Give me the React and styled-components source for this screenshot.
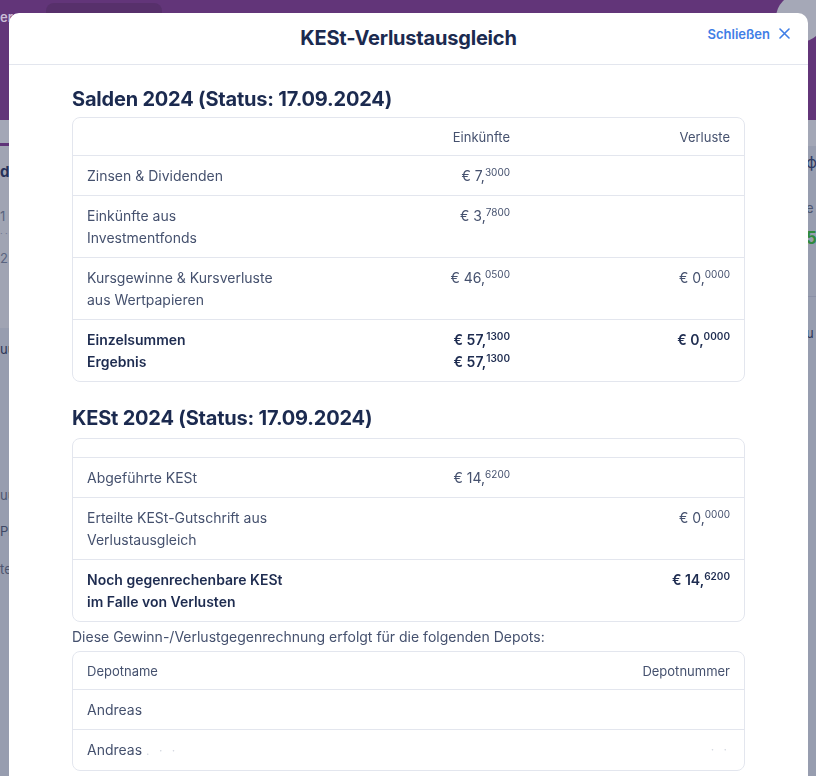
import React from "react";
import styled, { createGlobalStyle } from "styled-components";

const GlobalStyle = createGlobalStyle`
  html, body {
    margin: 0;
    height: 100%;
    overflow: hidden;
    background: #979daf;
    font-family: Inter, "Noto Sans", sans-serif;
  }
`;

/* ---------- dimmed page behind the dialog ---------- */

const Page = styled.div`
  height: 100vh;
  display: flex;
  flex-direction: column;
`;

const TopBar = styled.header`
  height: 120px;
  flex: none;
  background: #623579;
  display: flex;
  align-items: flex-start;
`;

const Brand = styled.span`
  margin: 9px 0 0 0;
  font-size: 13px;
  font-weight: 600;
  color: #c9bcd6;
`;

const NavPill = styled.div`
  margin: 3px 0 0 26px;
  width: 116px;
  height: 30px;
  border-radius: 8px;
  background: #57306b;
`;

const Avatar = styled.div`
  margin: -6px -8px 0 auto;
  width: 48px;
  height: 48px;
  border-radius: 50%;
  background: #a5a8b7;
`;

const SubBar = styled.div`
  height: 23px;
  flex: none;
  background: #a3a7b6;
  border-bottom: 3px solid #a3a7b6;
  display: flex;
  align-items: flex-end;
`;

const TabMark = styled.div`
  width: 60px;
  height: 3px;
  margin-bottom: -3px;
  background: #5f3478;
`;

const Body = styled.div`
  flex: 1;
  display: flex;
  justify-content: space-between;
`;

const SideCol = styled.div`
  width: ${(p) => p.$width}px;
  display: flex;
  flex-direction: column;
  align-items: flex-start;
`;

const Panel = styled.div`
  align-self: stretch;
  background: ${(p) => p.$bg || "transparent"};
  height: ${(p) => p.$h}px;
  border-bottom: ${(p) => (p.$line ? "1px solid #8a90a6" : "none")};
`;

const Frag = styled.div`
  white-space: nowrap;
  font-size: ${(p) => p.$size || 13}px;
  font-weight: ${(p) => (p.$bold ? 700 : 400)};
  color: ${(p) => p.$color || "#4d5670"};
  margin-top: ${(p) => p.$top || 0}px;
  line-height: 16px;
`;

/* ---------- dialog ---------- */

const Dialog = styled.div`
  position: fixed;
  top: 13px;
  left: 9px;
  width: 799px;
  bottom: -40px;
  background: #ffffff;
  border-radius: 10px 10px 0 0;
  display: flex;
  flex-direction: column;
  color: #45516e;
`;

const DialogHead = styled.div`
  height: 51px;
  flex: none;
  border-bottom: 1px solid #e3e6ee;
  display: grid;
  grid-template-columns: 1fr auto 1fr;
  align-items: center;
  padding: 0 18px;
`;

const DialogTitle = styled.h1`
  grid-column: 2;
  margin: -2px 0 0;
  font-size: 20px;
  font-weight: 700;
  letter-spacing: -0.2px;
  color: #1b2a4f;
`;

const CloseButton = styled.button`
  grid-column: 3;
  justify-self: end;
  display: flex;
  align-items: center;
  gap: 9px;
  margin-top: -10px;
  border: none;
  background: none;
  padding: 0;
  font-family: inherit;
  font-size: 13px;
  font-weight: 600;
  color: #3f7ee6;
  cursor: pointer;
`;

const DialogBody = styled.div`
  padding: 21px 63px 0;
  display: flex;
  flex-direction: column;
`;

const SectionTitle = styled.h2`
  margin: ${(p) => (p.$first ? 1 : 24)}px 0 ${(p) => (p.$first ? 6 : 8)}px;
  font-size: 20px;
  line-height: 24px;
  font-weight: 700;
  letter-spacing: -0.2px;
  color: #1b2a4f;
`;

const Card = styled.div`
  border: 1px solid #e3e6ee;
  border-radius: 8px;
`;

const Row = styled.div`
  display: grid;
  grid-template-columns: ${(p) => p.$cols || "200px 1fr 220px"};
  padding: ${(p) => (p.$empty ? "0" : p.$head ? "8px 14px 7px" : "9px 14px 8px")};
  height: ${(p) => (p.$empty ? "18px" : "auto")};
  font-size: ${(p) => (p.$head ? 13 : 14)}px;
  line-height: 22px;
  font-weight: ${(p) => (p.$bold ? 600 : 400)};
  color: ${(p) => (p.$bold ? "#1e2c50" : "#45516e")};
  & + & {
    border-top: 1px solid #e3e6ee;
  }
`;

const Cell = styled.div`
  text-align: ${(p) => (p.$right ? "right" : "left")};
  display: flex;
  flex-direction: column;
  align-items: ${(p) => (p.$right ? "flex-end" : "flex-start")};
`;

const Money = styled.span`
  white-space: nowrap;
`;

const Decimals = styled.sup`
  font-size: 10px;
  line-height: 0;
  vertical-align: 5px;
`;

const Note = styled.p`
  margin: 5px 0 4px;
  font-size: 14px;
  line-height: 20px;
  color: #45516e;
`;

const Blur = styled.span`
  color: #d2d6df;
  font-size: 12px;
  letter-spacing: 3px;
  margin-left: 4px;
`;

const CloseIcon = () => (
  <svg width="11" height="11" viewBox="0 0 11 11" fill="none">
    <path d="M1 1l9 9M10 1l-9 9" stroke="#3f7ee6" strokeWidth="1.6" strokeLinecap="round" />
  </svg>
);

const Amount = ({ value, dec }) => (
  <Money>
    € {value},<Decimals>{dec}</Decimals>
  </Money>
);

const salden = [
  { label: "Zinsen & Dividenden", ein: ["7", "3000"] },
  { label: "Einkünfte aus Investmentfonds", ein: ["3", "7800"] },
  { label: "Kursgewinne & Kursverluste aus Wertpapieren", ein: ["46", "0500"], ver: ["0", "0000"] },
];

export default function App() {
  return (
    <>
      <GlobalStyle />
      <Page>
        <TopBar>
          <Brand>ers</Brand>
          <NavPill />
          <Avatar />
        </TopBar>
        <SubBar>
          <TabMark />
        </SubBar>
        <Body>
          <SideCol $width={60}>
            <Panel $bg="#a0a4b3" $h={182}>
              <Frag $bold $size={15} $color="#26325a" $top={18}>dd</Frag>
              <Frag $color="#5a6480" $top={28}>1 234</Frag>
              <Frag $size={9} $color="#6c7590" $top={2}>· ·</Frag>
              <Frag $color="#5a6480" $top={8}>2 st</Frag>
            </Panel>
            <Frag $color="#2c3656" $top={13}>uu</Frag>
            <Frag $color="#4d5670" $top={130}>uu</Frag>
            <Frag $color="#3e4866" $top={20}>Pl</Frag>
            <Frag $color="#4d5670" $top={22}>te</Frag>
          </SideCol>
          <SideCol $width={10}>
            <Frag $size={16} $color="#2e3a63" $top={8}>ф</Frag>
            <Frag $color="#4d5670" $top={30}>e</Frag>
            <Frag $bold $size={17} $color="#2f8a3e" $top={14}>5</Frag>
            <Panel $h={50} $line />
            <Frag $color="#2c3656" $top={28}>u</Frag>
          </SideCol>
        </Body>
      </Page>

      <Dialog>
        <DialogHead>
          <DialogTitle>KESt-Verlustausgleich</DialogTitle>
          <CloseButton>
            Schließen
            <CloseIcon />
          </CloseButton>
        </DialogHead>

        <DialogBody>
          <SectionTitle $first>Salden 2024 (Status: 17.09.2024)</SectionTitle>
          <Card>
            <Row $head>
              <Cell />
              <Cell $right>Einkünfte</Cell>
              <Cell $right>Verluste</Cell>
            </Row>
            {salden.map((r) => (
              <Row key={r.label}>
                <Cell>{r.label}</Cell>
                <Cell $right>{r.ein && <Amount value={r.ein[0]} dec={r.ein[1]} />}</Cell>
                <Cell $right>{r.ver && <Amount value={r.ver[0]} dec={r.ver[1]} />}</Cell>
              </Row>
            ))}
            <Row $bold>
              <Cell>
                <span>Einzelsummen</span>
                <span>Ergebnis</span>
              </Cell>
              <Cell $right>
                <Amount value="57" dec="1300" />
                <Amount value="57" dec="1300" />
              </Cell>
              <Cell $right>
                <Amount value="0" dec="0000" />
              </Cell>
            </Row>
          </Card>

          <SectionTitle>KESt 2024 (Status: 17.09.2024)</SectionTitle>
          <Card>
            <Row $empty />
            <Row>
              <Cell>Abgeführte KESt</Cell>
              <Cell $right>
                <Amount value="14" dec="6200" />
              </Cell>
              <Cell />
            </Row>
            <Row>
              <Cell>Erteilte KESt-Gutschrift aus Verlustausgleich</Cell>
              <Cell />
              <Cell $right>
                <Amount value="0" dec="0000" />
              </Cell>
            </Row>
            <Row $bold>
              <Cell>Noch gegenrechenbare KESt im Falle von Verlusten</Cell>
              <Cell />
              <Cell $right>
                <Amount value="14" dec="6200" />
              </Cell>
            </Row>
          </Card>

          <Note>Diese Gewinn-/Verlustgegenrechnung erfolgt für die folgenden Depots:</Note>
          <Card>
            <Row $head $cols="1fr auto">
              <Cell>Depotname</Cell>
              <Cell $right>Depotnummer</Cell>
            </Row>
            <Row $cols="1fr auto">
              <Cell>Andreas</Cell>
              <Cell />
            </Row>
            <Row $cols="1fr auto">
              <Cell>
                <span>
                  Andreas<Blur>. · ·</Blur>
                </span>
              </Cell>
              <Cell $right>
                <Blur>· ·</Blur>
              </Cell>
            </Row>
          </Card>
        </DialogBody>
      </Dialog>
    </>
  );
}
